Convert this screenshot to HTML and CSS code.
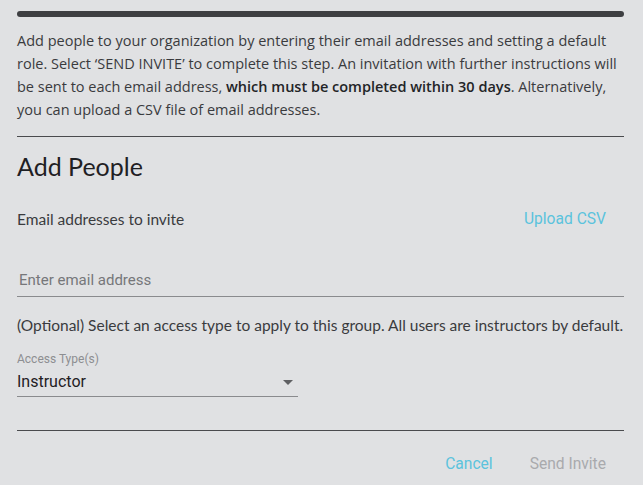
FILE: index.html
```html
<!DOCTYPE html>
<html>
<head>
<meta charset="utf-8">
<link rel="stylesheet" href="styles.css">
</head>
<body>
<div class="dialog">
  <div class="topbar"></div>
  <p class="intro">Add people to your organization by entering their email addresses and setting a default role. Select ‘SEND INVITE’ to complete this step. An invitation with further instructions will be sent to each email address, <strong>which must be completed within 30 days</strong>. Alternatively, you can upload a CSV file of email addresses.</p>
  <hr class="divider">
  <h2 class="title">Add People</h2>
  <div class="row">
    <span class="label">Email addresses to invite</span>
    <button class="link-btn">Upload CSV</button>
  </div>
  <div class="email-field">
    <input class="email-input" type="text" placeholder="Enter email address">
  </div>
  <p class="optional">(Optional) Select an access type to apply to this group. All users are instructors by default.</p>
  <div class="select-field">
    <span class="select-label">Access Type(s)</span>
    <div class="select-value">
      <span>Instructor</span>
      <svg class="arrow" width="10" height="5" viewBox="0 0 10 5"><path d="M0 0h10L5 5z" fill="#5f6063"/></svg>
    </div>
  </div>
  <hr class="divider divider-bottom">
  <div class="actions">
    <button class="link-btn">Cancel</button>
    <button class="link-btn disabled">Send Invite</button>
  </div>
</div>
</body>
</html>
```
FILE: styles.css
```css
html, body {
  margin: 0;
  padding: 0;
  background: #e0e1e3;
}
.dialog {
  padding: 11px 19px 0 17px;
  font-family: Lato, "Noto Sans", sans-serif;
  color: #333436;
}
.topbar {
  height: 6px;
  border-radius: 3px;
  background: #3e3f42;
}
.intro {
  margin: 12px 0 0;
  font-family: "Open Sans", Lato, sans-serif;
  font-size: 14.5px;
  line-height: 23px;
  color: #3a3b3e;
}
.intro strong {
  font-weight: 600;
  color: #232427;
}
.divider {
  margin: 15px 0 0;
  border: 0;
  height: 1px;
  background: #4a4b4e;
}
.title {
  margin: 15px 0 0;
  font-size: 25px;
  line-height: 28px;
  font-weight: 400;
  color: #1f2023;
}
.row {
  display: flex;
  justify-content: space-between;
  align-items: center;
  margin-top: 29px;
  height: 20px;
}
.label {
  font-size: 15.5px;
  color: #3a3b3e;
}
.link-btn {
  border: 0;
  background: none;
  padding: 0 18px 0 0;
  font-family: Roboto, sans-serif;
  font-size: 15.6px;
  color: #5bc3dd;
  cursor: pointer;
}
.email-field {
  margin-top: 39px;
  border-bottom: 1px solid #8a8b8e;
}
.email-input {
  display: block;
  width: 100%;
  box-sizing: border-box;
  border: 0;
  background: transparent;
  padding: 2px 0 6px 2px;
  height: 28px;
  font-family: Roboto, sans-serif;
  font-size: 15px;
  color: #333;
  outline: none;
}
.email-input::placeholder {
  color: #76777a;
}
.optional {
  margin: 17px 0 0;
  font-size: 15.5px;
  line-height: 23px;
  color: #3a3b3e;
}
.select-field {
  margin-top: 15px;
  width: 281px;
  border-bottom: 1px solid #8a8b8e;
  font-family: Roboto, sans-serif;
}
.select-label {
  display: block;
  font-size: 12px;
  line-height: 14px;
  color: #8d8e91;
}
.select-value {
  display: flex;
  justify-content: space-between;
  align-items: center;
  height: 30px;
  padding-right: 5px;
  font-size: 16px;
  color: #1f2023;
}
.arrow {
  margin-top: 2px;
}
.divider-bottom {
  margin-top: 33px;
}
.actions {
  display: flex;
  justify-content: flex-end;
  gap: 37px;
  margin-top: 24px;
}
.actions .link-btn {
  padding: 0;
}
.actions .link-btn:last-child {
  margin-right: 18px;
}
.link-btn.disabled {
  color: #a9aaad;
  cursor: default;
}
```
